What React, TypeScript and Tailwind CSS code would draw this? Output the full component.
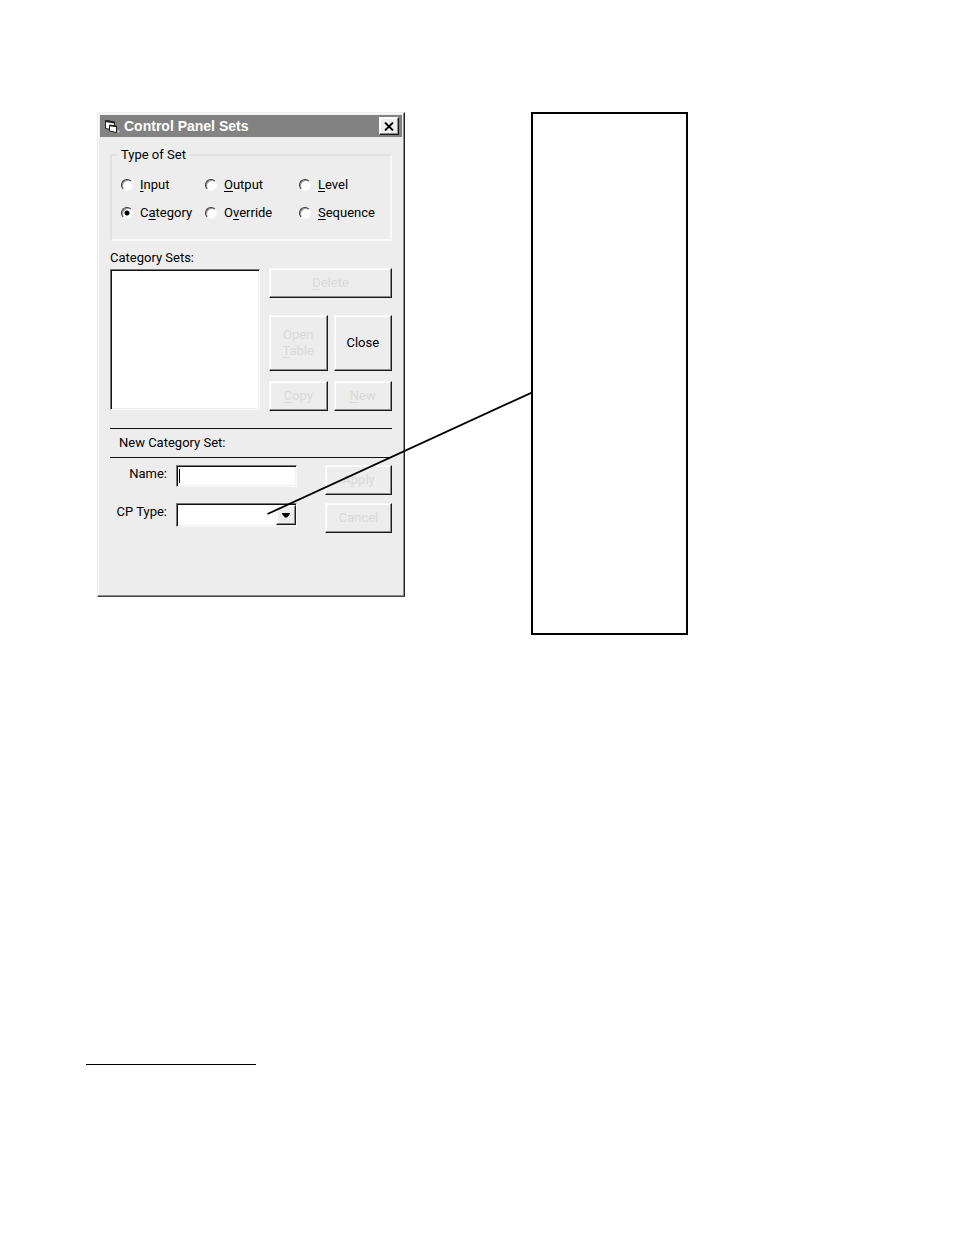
import { useState, type ReactNode } from 'react';

interface SetType {
  id: string;
  before?: string;
  hotkey: string;
  after: string;
}

const SET_TYPES: SetType[] = [
  { id: 'input', hotkey: 'I', after: 'nput' },
  { id: 'output', hotkey: 'O', after: 'utput' },
  { id: 'level', hotkey: 'L', after: 'evel' },
  { id: 'category', before: 'C', hotkey: 'a', after: 'tegory' },
  { id: 'override', before: 'O', hotkey: 'v', after: 'erride' },
  { id: 'sequence', hotkey: 'S', after: 'equence' },
];

const RAISED =
  'border border-t-[#f8f8f8] border-l-[#f8f8f8] border-r-[#1a1a1a] border-b-[#1a1a1a] bg-[#ededed] shadow-[inset_-1px_-1px_0_#8c8c8c,inset_1px_1px_0_#fff]';

const SUNKEN =
  'border border-t-[#777777] border-l-[#777777] border-r-[#f8f8f8] border-b-[#f8f8f8] bg-white shadow-[inset_1px_1px_0_#111,inset_-1px_-1px_0_#f0f0f0] rounded-none outline-none';

const Hotkey = ({ children }: { children: ReactNode }) => (
  <span className="underline underline-offset-2">{children}</span>
);

interface PushButtonProps {
  children: ReactNode;
  disabled?: boolean;
  className?: string;
}

const PushButton = ({ children, disabled, className = '' }: PushButtonProps) => (
  <button type="button" disabled={disabled} className={`text-black disabled:text-[#d9d9d9] ${RAISED} ${className}`}>
    {children}
  </button>
);

const FormIcon = () => (
  <svg width="16" height="16" viewBox="0 0 16 16" aria-hidden="true">
    <path d="M1.5 2.5L10.5 4v8L1.5 10.5z" fill="#ffffff" stroke="#222222" />
    <path d="M1.5 3L10.5 4.5" stroke="#222222" strokeWidth="2" />
    <path d="M5.5 7L12.5 8v6.5L5.5 13z" fill="#ffffff" stroke="#222222" />
    <path d="M5.5 7.5L12.5 8.5" stroke="#222222" strokeWidth="1.5" />
    <path d="M13.5 12.5h2v2h-2z" fill="#d0d0d0" />
  </svg>
);

function TitleBar() {
  return (
    <div className="flex h-[22px] items-center bg-[#828282] pr-[3px] pl-1">
      <FormIcon />
      <h1 className="ml-1 flex-1 font-['Liberation_Sans',sans-serif] text-sm font-bold text-white">
        Control Panel Sets
      </h1>
      <button
        type="button"
        aria-label="Close window"
        className={`flex h-[18px] w-5 items-center justify-center ${RAISED}`}
      >
        <svg width="10" height="9" viewBox="0 0 10 9" aria-hidden="true">
          <path d="M1 0.5l8 8M9 0.5l-8 8" stroke="#000000" strokeWidth="1.8" />
        </svg>
      </button>
    </div>
  );
}

function TypeOfSet() {
  const [selected, setSelected] = useState('category');

  return (
    <fieldset className="mt-[10px] border-2 border-t-[#e0e0e0] border-l-[#e0e0e0] border-r-[#f8f8f8] border-b-[#f8f8f8] px-[9px] pb-3">
      <legend className="-ml-1 px-1">Type of Set</legend>
      <div className="grid grid-cols-[84px_94px_1fr] pt-2">
        {SET_TYPES.map((type) => (
          <label key={type.id} className="flex h-7 items-center gap-[7px]">
            <input
              type="radio"
              name="set-type"
              checked={selected === type.id}
              onChange={() => setSelected(type.id)}
              className="h-3 w-3 appearance-none rounded-full border border-t-[#333333] border-l-[#333333] border-r-[#f8f8f8] border-b-[#f8f8f8] bg-white shadow-[inset_1px_1px_0_#999] checked:bg-[radial-gradient(circle,#000_2px,#fff_3px)]"
            />
            <span>
              {type.before}
              <Hotkey>{type.hotkey}</Hotkey>
              {type.after}
            </span>
          </label>
        ))}
      </div>
    </fieldset>
  );
}

function CategorySets() {
  return (
    <section className="mt-[9px]">
      <label htmlFor="category-sets" className="block">
        Category Sets:
      </label>
      <div className="mt-[2px] flex gap-[9px]">
        <select id="category-sets" size={6} className={`my-px w-[150px] appearance-none ${SUNKEN}`} />
        <div className="flex-1">
          <PushButton disabled className="h-[30px] w-full">
            <Hotkey>D</Hotkey>elete
          </PushButton>
          <div className="mt-[17px] grid grid-cols-2 gap-x-[6px] gap-y-[10px]">
            <PushButton disabled className="h-14">
              Open
              <br />
              <Hotkey>T</Hotkey>able
            </PushButton>
            <PushButton className="h-14">Close</PushButton>
            <PushButton disabled className="h-[30px]">
              <Hotkey>C</Hotkey>opy
            </PushButton>
            <PushButton disabled className="h-[30px]">
              <Hotkey>N</Hotkey>ew
            </PushButton>
          </div>
        </div>
      </div>
    </section>
  );
}

function NewCategorySet() {
  return (
    <section className="mt-[17px]">
      <h2 className="flex h-[30px] items-center border-y border-[#111111] px-[9px]">New Category Set:</h2>
      <div className="mt-[7px] flex h-[30px] items-start">
        <label htmlFor="set-name" className="w-[57px] pt-px text-right">
          Name:
        </label>
        <div className="relative ml-[9px]">
          <input id="set-name" type="text" className={`block h-[22px] w-[121px] px-1 ${SUNKEN}`} />
          <span className="absolute top-1 left-[3px] h-[14px] w-px bg-black" />
        </div>
        <PushButton disabled className="ml-auto h-full w-[67px]">
          Apply
        </PushButton>
      </div>
      <div className="mt-2 flex h-[30px] items-start">
        <label htmlFor="cp-type" className="w-[57px] pt-px text-right">
          CP Type:
        </label>
        <div className="relative ml-[9px]">
          <select id="cp-type" className={`block h-6 w-[121px] appearance-none px-1 ${SUNKEN}`} />
          <span
            className={`pointer-events-none absolute top-[2px] right-px flex h-5 w-5 items-center justify-center ${RAISED}`}
          >
            <svg width="8" height="5" viewBox="0 0 8 5" aria-hidden="true">
              <path d="M0 0h8v1L5 4.500H3L0 1z" fill="#000000" />
            </svg>
          </span>
        </div>
        <PushButton disabled className="ml-auto h-full w-[67px]">
          Cancel
        </PushButton>
      </div>
    </section>
  );
}

export default function App() {
  return (
    <main className="min-h-screen bg-white pt-28 pl-[86px] font-['Roboto','Liberation_Sans',sans-serif] text-[13px] leading-4 text-black">
      <div className="relative ml-[11px] flex items-start gap-[126px]">
        <div className="w-[308px] shrink-0 border border-t-[#eeeeee] border-l-[#eeeeee] border-r-[#222222] border-b-[#444444] bg-[#ededed] p-[2px] shadow-[inset_-1px_-1px_0_#8c8c8c,inset_1px_1px_0_#fafafa]">
          <TitleBar />
          <div className="px-[10px] pb-[61px]">
            <TypeOfSet />
            <CategorySets />
            <NewCategorySet />
          </div>
        </div>
        <div className="min-h-[523px] w-[157px] shrink-0 border-2 border-black" />
        {/* leader line from the callout to the CP Type list */}
        <svg
          className="pointer-events-none absolute top-[280px] left-[170px]"
          width="265"
          height="123"
          viewBox="0 0 265 123"
          aria-hidden="true"
        >
          <path d="M0.5 122L265 0.5" stroke="#000000" strokeWidth="1.8" />
        </svg>
      </div>
      <hr className="mt-[429px] w-[170px] border-black" />
    </main>
  );
}
